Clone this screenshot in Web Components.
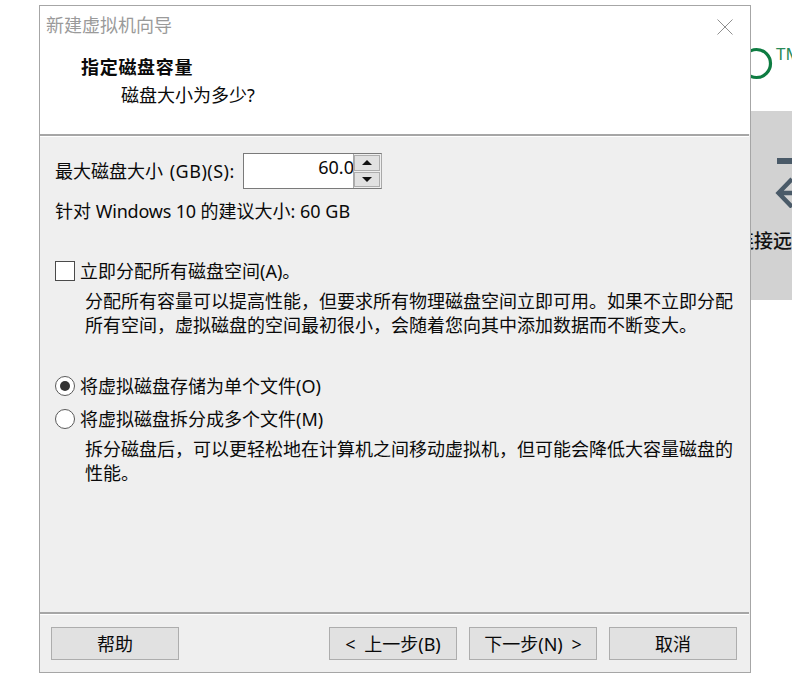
<!DOCTYPE html>
<html lang="zh">
<head>
<meta charset="utf-8">
<title>新建虚拟机向导</title>
<style>
  html, body { margin: 0; padding: 0; background: #fff; }
  body { width: 792px; height: 690px; overflow: hidden; font: 18px/24px "Noto Sans", "Noto Sans CJK SC", sans-serif; color: #0a0a0a; }
</style>
</head>
<body>
<desktop-backdrop>
  <wizard-dialog slot="window" heading="新建虚拟机向导" step="指定磁盘容量" question="磁盘大小为多少?">
    <size-field cjk="最大磁盘大小" latin="(GB)(S):" value="60.0"></size-field>
    <hint-line style="margin-top:10px">针对 <span style="letter-spacing:-.2px">Windows 10</span> 的建议大小: 60 GB</hint-line>
    <option-row kind="checkbox" style="margin-top:36px">立即分配所有磁盘空间(A)。</option-row>
    <hint-text style="margin-top:6px">分配所有容量可以提高性能，但要求所有物理磁盘空间立即可用。如果不立即分配<br>所有空间，虚拟磁盘的空间最初很小，会随着您向其中添加数据而不断变大。</hint-text>
    <option-row kind="radio" checked style="margin-top:37px">将虚拟磁盘存储为单个文件(O)</option-row>
    <option-row kind="radio" style="margin-top:9px">将虚拟磁盘拆分成多个文件(M)</option-row>
    <hint-text style="margin-top:6px">拆分磁盘后，可以更轻松地在计算机之间移动虚拟机，但可能会降低大容量磁盘的<br>性能。</hint-text>
    <wizard-button slot="help">帮助</wizard-button>
    <wizard-button slot="nav">&lt; 上一步(B)</wizard-button>
    <wizard-button slot="nav">下一步(N) &gt;</wizard-button>
    <wizard-button slot="nav">取消</wizard-button>
  </wizard-dialog>
</desktop-backdrop>

<script>
// small helper, every element just stamps its html into an open shadow root
function shadow(el, html) {
  el.attachShadow({ mode: "open" }).innerHTML = html;
  return el.shadowRoot;
}

class DesktopBackdrop extends HTMLElement {
  constructor() {
    super();
    shadow(this, `
      <style>
        :host { display: block; position: relative; width: 792px; height: 690px; overflow: hidden; }
        #logo { position: absolute; left: 730px; top: 46px; width: 44px; height: 36px; }
        #tm { position: absolute; left: 776px; top: 45px; font-size: 17px; line-height: 18px; color: #2a8a58; }
        #panel { position: absolute; left: 700px; top: 111px; width: 92px; height: 189px; background: #d2d2d2; }
        #arrow { position: absolute; left: 775px; top: 158px; }
        #label { position: absolute; left: 735px; top: 229px; white-space: nowrap; font-size: 19px; font-weight: 500; line-height: 24px; color: #111; }
        #window { position: absolute; left: 39px; top: 5px; }
      </style>
      <svg id="logo" viewBox="0 0 44 36"><circle cx="26.5" cy="17.5" r="14" fill="none" stroke="#0e7c42" stroke-width="3.2"/></svg>
      <div id="tm">TM</div>
      <div id="panel"></div>
      <svg id="arrow" width="17" height="50" viewBox="0 0 17 50">
        <rect x="2" y="0" width="15" height="6" fill="#4a5a68"/>
        <path d="M17 21 L3.5 35 L17 49 M3.5 35 H17" fill="none" stroke="#4a5a68" stroke-width="4.4"/>
      </svg>
      <div id="label">连接远</div>
      <div id="window"><slot name="window"></slot></div>
    `);
  }
}

class WizardDialog extends HTMLElement {
  constructor() {
    super();
    const root = shadow(this, `
      <style>
        :host { display: block; width: 712px; height: 668px; box-sizing: border-box; border: 1px solid #a6a6a6; background: #efefef; }
        #frame { display: flex; flex-direction: column; height: 100%; }
        header { position: relative; height: 128px; flex: none; box-sizing: border-box; background: #fff; padding: 6px 0 0 6px; }
        #title { color: #9a9a9a; line-height: 26px; }
        #step { font-weight: 700; margin: 16px 0 0 35px; line-height: 26px; letter-spacing: .7px; }
        #question { margin: 2px 0 0 75px; line-height: 26px; }
        #close { position: absolute; right: 16px; top: 12px; }
        hr { margin: 0 1px 0 0; border: 0; height: 2px; background: #a6a6a6; flex: none; box-shadow: 0 1px 0 #fff; }
        main { flex: 1; padding: 17px 16px 0 15px; }
        #rule { height: 2px; margin-right: 1px; background: #a6a6a6; box-shadow: 0 1px 0 #fff; flex: none; }
        footer { flex: none; height: 58px; box-sizing: border-box; padding: 13px 13px 0 11px; display: flex; justify-content: space-between; }
        #nav { display: flex; gap: 12px; }
      </style>
      <div id="frame">
        <header>
          <div id="title"></div>
          <div id="step"></div>
          <div id="question"></div>
          <svg id="close" width="18" height="18" viewBox="0 0 18 18"><path d="M1.5 1.5 L16.5 16.5 M16.5 1.5 L1.5 16.5" stroke="#8f8f8f" stroke-width="1"/></svg>
        </header>
        <hr>
        <main><slot></slot></main>
        <div id="rule"></div>
        <footer>
          <slot name="help"></slot>
          <div id="nav"><slot name="nav"></slot></div>
        </footer>
      </div>
    `);
    root.getElementById("title").textContent = this.getAttribute("heading");
    root.getElementById("step").textContent = this.getAttribute("step");
    root.getElementById("question").textContent = this.getAttribute("question");
  }
}

class SizeField extends HTMLElement {
  constructor() {
    super();
    const root = shadow(this, `
      <style>
        :host { display: flex; align-items: center; height: 36px; }
        #label { width: 188px; flex: none; white-space: nowrap; word-spacing: 2px; }
        #latin { letter-spacing: .5px; }
        #box { display: flex; width: 139px; height: 36px; box-sizing: border-box; background: #fff; border: 1px solid #a9a9a9; border-left-color: #7a7a7a; border-top-color: #7a7a7a; border-bottom-color: #7a7a7a; }
        #value { flex: 1; text-align: right; margin-right: -1px; line-height: 26px; }
        #spin { width: 26px; flex: none; display: flex; flex-direction: column; gap: 1px; padding: 1px 1px 1px 0; background: #efefef; border-left: 1px solid #a9a9a9; }
        .arrow { flex: 1; background: #e1e1e1; border: 1px solid #adadad; display: flex; align-items: center; justify-content: center; }
        .arrow i { width: 0; height: 0; border-left: 5px solid transparent; border-right: 5px solid transparent; }
        #up i { border-bottom: 5px solid #111; }
        #down i { border-top: 5px solid #111; }
      </style>
      <div id="label"><span id="cjk"></span> <span id="latin"></span></div>
      <div id="box">
        <div id="value"></div>
        <div id="spin"><div class="arrow" id="up"><i></i></div><div class="arrow" id="down"><i></i></div></div>
      </div>
    `);
    root.getElementById("cjk").textContent = this.getAttribute("cjk");
    root.getElementById("latin").textContent = this.getAttribute("latin");
    root.getElementById("value").textContent = this.getAttribute("value");
  }
}

class HintLine extends HTMLElement {
  constructor() {
    super();
    shadow(this, `<style>:host { display: block; line-height: 24px; white-space: nowrap; }</style><slot></slot>`);
  }
}

class HintText extends HTMLElement {
  constructor() {
    super();
    shadow(this, `<style>:host { display: block; margin-left: 30px; line-height: 24px; white-space: nowrap; }</style><slot></slot>`);
  }
}

class OptionRow extends HTMLElement {
  constructor() {
    super();
    const radio = this.getAttribute("kind") === "radio";
    const on = this.hasAttribute("checked");
    const mark = radio
      ? `<svg width="20" height="20" viewBox="0 0 20 20"><circle cx="10" cy="10" r="9.5" fill="#fff" stroke="#5a5a5a"/>${on ? '<circle cx="10" cy="10" r="5" fill="#333"/>' : ""}</svg>`
      : `<svg width="20" height="20" viewBox="0 0 20 20"><rect x="0.5" y="0.5" width="19" height="19" fill="#fff" stroke="#4a4a4a"/></svg>`;
    shadow(this, `
      <style>
        :host { display: flex; align-items: center; gap: 5px; height: 24px; white-space: nowrap; }
        svg { flex: none; display: block; }
      </style>
      ${mark}<span><slot></slot></span>
    `);
  }
}

class WizardButton extends HTMLElement {
  constructor() {
    super();
    shadow(this, `
      <style>
        :host { display: flex; align-items: center; justify-content: center; width: 128px; height: 33px; box-sizing: border-box; background: #e1e1e1; border: 1px solid #adadad; white-space: nowrap; word-spacing: 4px; }
      </style>
      <slot></slot>
    `);
  }
}

customElements.define("desktop-backdrop", DesktopBackdrop);
customElements.define("wizard-dialog", WizardDialog);
customElements.define("size-field", SizeField);
customElements.define("hint-line", HintLine);
customElements.define("hint-text", HintText);
customElements.define("option-row", OptionRow);
customElements.define("wizard-button", WizardButton);
</script>
</body>
</html>
